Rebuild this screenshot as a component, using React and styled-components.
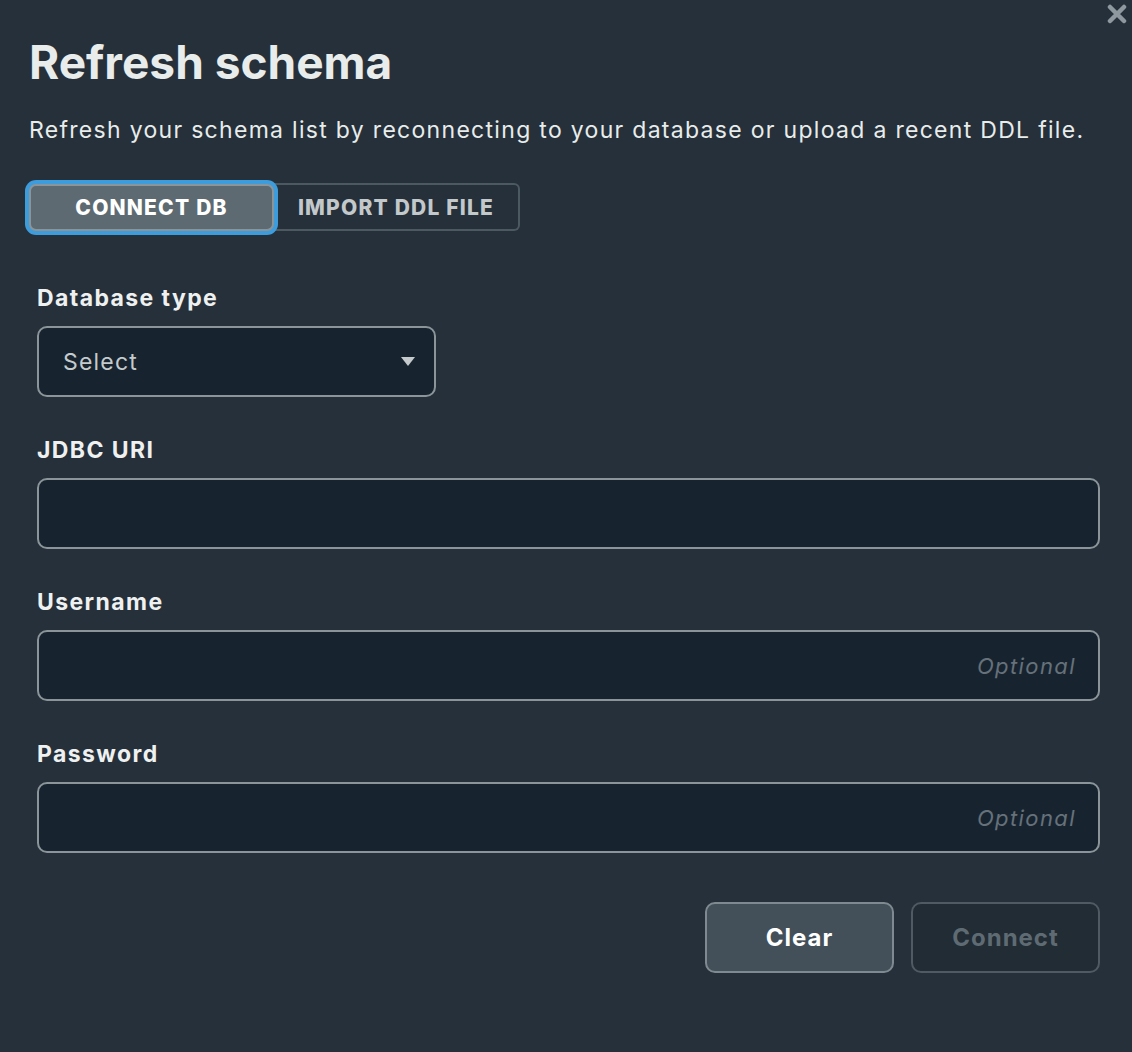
import React from "react";
import styled, { createGlobalStyle } from "styled-components";

const Global = createGlobalStyle`
  html, body { margin: 0; padding: 0; background: #25303a; }
  body { font-family: Inter, "Noto Sans", sans-serif; }
  * { box-sizing: border-box; }
`;

const Modal = styled.div`
  position: relative;
  width: 1132px;
  height: 1052px;
  background: #25303a;
  padding: 32px 32px 0 29px;
  color: #e8eceb;
`;

const Close = styled.button`
  position: absolute;
  top: 3px;
  right: 4px;
  width: 22px;
  height: 22px;
  padding: 0;
  border: 0;
  background: transparent;
  cursor: pointer;
  display: flex;
  align-items: center;
  justify-content: center;
`;

const Title = styled.h1`
  margin: 0;
  font-size: 46px;
  font-weight: 700;
  line-height: 60px;
  color: #e8eceb;
  letter-spacing: 0;
`;

const Description = styled.p`
  margin: 23px 0 0;
  font-size: 23px;
  line-height: 30px;
  color: #e8eceb;
  letter-spacing: 1.3px;
  white-space: nowrap;
`;

const Tabs = styled.div`
  display: flex;
  margin-top: 38px;
  margin-left: -4px;
  align-items: center;
`;

const Tab = styled.button`
  padding: 0;
  font-family: inherit;
  font-weight: 800;
  font-size: 21px;
  letter-spacing: 1.2px;
  text-transform: uppercase;
  color: ${(p) => (p.$active ? "#ffffff" : "#c3c9cb")};
  background: ${(p) => (p.$active ? "#5d6a72" : "transparent")};
  border: 2px solid ${(p) => (p.$active ? "#8a959b" : "#4d5961")};
  border-left-width: ${(p) => (p.$active ? "2px" : "0")};
  border-radius: ${(p) => (p.$active ? "7px" : "0 6px 6px 0")};
  box-shadow: ${(p) => (p.$active ? "0 0 0 4px #3d9cdb" : "none")};
  outline: none;
  position: relative;
  z-index: ${(p) => (p.$active ? 1 : 0)};
  width: ${(p) => (p.$active ? "245px" : "246px")};
  height: ${(p) => (p.$active ? "47px" : "48px")};
  margin: ${(p) => (p.$active ? "0 0 0 4px" : "0")};
`;

const Form = styled.div`
  display: flex;
  flex-direction: column;
  padding-left: 8px;
  margin-top: 53px;
`;

const Field = styled.div`
  display: flex;
  flex-direction: column;
  margin-bottom: 39px;
`;

const Label = styled.label`
  font-size: 23px;
  font-weight: 700;
  line-height: 28px;
  letter-spacing: 1.4px;
  color: #eef1f0;
  margin-bottom: 14px;
`;

const InputBox = styled.div`
  width: ${(p) => p.$width || "1063px"};
  height: 71px;
  background: #172430;
  border: 2px solid #8b9498;
  border-radius: 10px;
  display: flex;
  align-items: center;
  justify-content: ${(p) => (p.$end ? "flex-end" : "space-between")};
  padding: 0 19px 0 24px;
`;

const Placeholder = styled.span`
  font-size: 22px;
  font-style: italic;
  letter-spacing: 1.4px;
  color: #66717a;
  padding-right: 3px;
`;

const SelectText = styled.span`
  font-size: 23px;
  letter-spacing: 1.2px;
  color: #c5cbcd;
`;

const Actions = styled.div`
  display: flex;
  justify-content: flex-end;
  gap: 17px;
  width: 1063px;
  margin-top: 10px;
`;

const Button = styled.button`
  width: 189px;
  height: 71px;
  border-radius: 10px;
  font-family: inherit;
  font-size: 24px;
  font-weight: 700;
  letter-spacing: 1px;
  border: 2px solid ${(p) => (p.$primary ? "#7f8a90" : "#4f5a62")};
  background: ${(p) => (p.$primary ? "#435059" : "#222c35")};
  color: ${(p) => (p.$primary ? "#ffffff" : "#5f6b73")};
`;

export default function App() {
  return (
    <>
      <Global />
      <Modal>
        <Close aria-label="Close">
          <svg width="20" height="20" viewBox="0 0 20 20">
            <path d="M3 3 L17 17 M17 3 L3 17" stroke="#8f989e" strokeWidth="4.5" strokeLinecap="round" />
          </svg>
        </Close>
        <Title>Refresh schema</Title>
        <Description>
          Refresh your schema list by reconnecting to your database or upload a recent DDL file.
        </Description>
        <Tabs>
          <Tab $active>Connect DB</Tab>
          <Tab>Import DDL File</Tab>
        </Tabs>
        <Form>
          <Field>
            <Label>Database type</Label>
            <InputBox $width="399px">
              <SelectText>Select</SelectText>
              <svg width="14" height="9" viewBox="0 0 14 9">
                <path d="M0 0 H14 L7 9 Z" fill="#c5cbcd" />
              </svg>
            </InputBox>
          </Field>
          <Field>
            <Label>JDBC URI</Label>
            <InputBox />
          </Field>
          <Field>
            <Label>Username</Label>
            <InputBox $end>
              <Placeholder>Optional</Placeholder>
            </InputBox>
          </Field>
          <Field>
            <Label>Password</Label>
            <InputBox $end>
              <Placeholder>Optional</Placeholder>
            </InputBox>
          </Field>
          <Actions>
            <Button $primary>Clear</Button>
            <Button>Connect</Button>
          </Actions>
        </Form>
      </Modal>
    </>
  );
}
